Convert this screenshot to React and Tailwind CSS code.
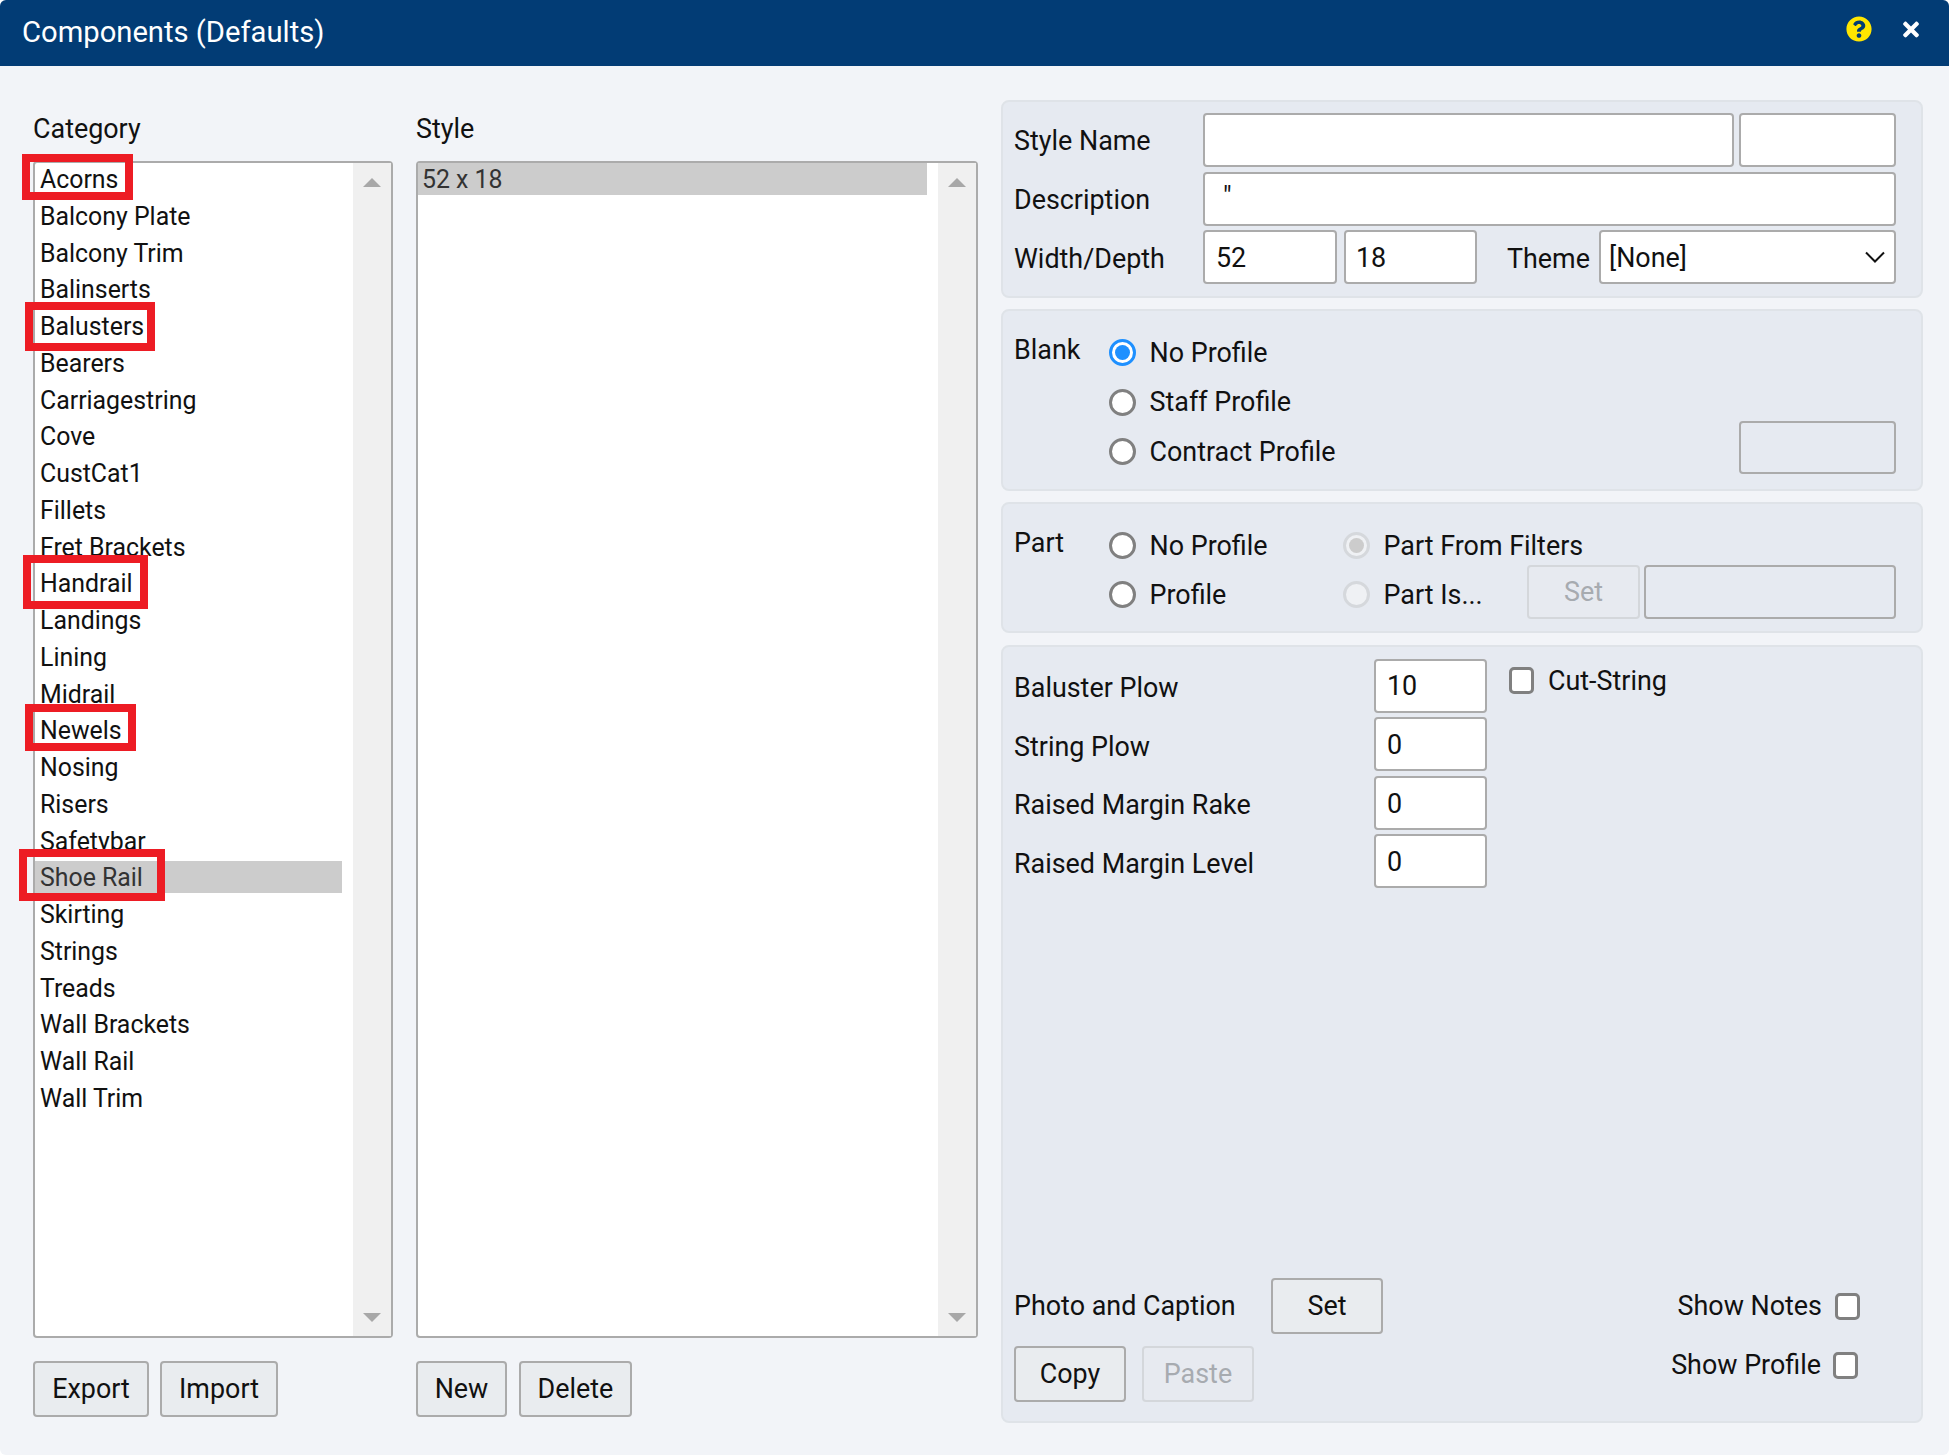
import React from 'react';
import { FaQuestionCircle, FaTimes } from 'react-icons/fa';

const CATEGORIES = [
  { name: 'Acorns', mark: 'left-[-13px] top-[-9px] w-[111px] h-[46px]' },
  { name: 'Balcony Plate' },
  { name: 'Balcony Trim' },
  { name: 'Balinserts' },
  { name: 'Balusters', mark: 'left-[-10px] top-[-8px] w-[130px] h-[49px]' },
  { name: 'Bearers' },
  { name: 'Carriagestring' },
  { name: 'Cove' },
  { name: 'CustCat1' },
  { name: 'Fillets' },
  { name: 'Fret Brackets' },
  { name: 'Handrail', mark: 'left-[-12px] top-[-12px] w-[125px] h-[54px]' },
  { name: 'Landings' },
  { name: 'Lining' },
  { name: 'Midrail' },
  { name: 'Newels', mark: 'left-[-10px] top-[-10px] w-[111px] h-[47px]' },
  { name: 'Nosing' },
  { name: 'Risers' },
  { name: 'Safetybar' },
  { name: 'Shoe Rail', selected: true, mark: 'left-[-16px] top-[-12px] w-[146px] h-[52px]' },
  { name: 'Skirting' },
  { name: 'Strings' },
  { name: 'Treads' },
  { name: 'Wall Brackets' },
  { name: 'Wall Rail' },
  { name: 'Wall Trim' },
];

const ListBox = ({ items, inset = 'pl-[5px]' }) => (
  <div className="flex h-[1177px] rounded-[4px] border-2 border-[#ababab] bg-white text-[24.86px]">
    <div className="min-w-0 flex-1 pr-[11px]">
      {items.map((item) => (
        <div
          key={item.name}
          className={`relative mb-[4.76px] h-[32px] leading-[33px] ${inset} ${item.selected ? 'bg-[#cccccc] text-[#333333]' : ''}`}
        >
          {item.name}
          {item.mark && <div className={`absolute z-10 border-[8px] border-[#ed1c24] ${item.mark}`} />}
        </div>
      ))}
    </div>
    <div className="flex w-[38px] flex-col items-center justify-between bg-[#f0f0f0] pt-[15px] pb-[14px]">
      <svg width="18" height="9" viewBox="0 0 18 9"><path d="M9 0 18 9H0Z" fill="#a8a8a8" /></svg>
      <svg width="18" height="9" viewBox="0 0 18 9"><path d="M0 0H18L9 9Z" fill="#a8a8a8" /></svg>
    </div>
  </div>
);

const Button = ({ children, width, disabled, className = '' }) => (
  <button
    className={`h-[56px] rounded-[4px] border-2 ${disabled ? 'border-[#d4d7db] bg-[#e7eaf0] text-[#a7abb0]' : 'border-[#ababab] bg-[#e9ecef] text-[#111111]'} ${width} ${className}`}
  >
    {children}
  </button>
);

const Field = ({ value = '', className = '' }) => (
  <input
    readOnly
    value={value}
    className={`h-[54px] rounded-[4px] border-2 border-[#ababab] bg-white pl-[10px] pt-[1px] text-[#111111] outline-none ${className}`}
  />
);

const Radio = ({ label, checked, disabled, className = '' }) => {
  let ring = 'border-[#808080] bg-white';
  if (checked) ring = 'border-[#1e90ff] bg-white';
  if (disabled) ring = 'border-[#d5d8dc] bg-[#eff1f4]';
  return (
    <div className={`flex h-[27px] items-center ${className}`}>
      <span className={`mr-[13.5px] flex h-[27px] w-[27px] shrink-0 items-center justify-center rounded-full border-[3px] ${ring}`}>
        {checked && <span className={`h-[15px] w-[15px] rounded-full ${disabled ? 'bg-[#cccccc]' : 'bg-[#1e90ff]'}`} />}
      </span>
      <span className="whitespace-nowrap pt-[1px]">{label}</span>
    </div>
  );
};

const Check = () => (
  <span className="h-[27px] w-[25px] shrink-0 rounded-[5px] border-[3px] border-[#808080] bg-white" />
);

const Panel = ({ children, className = '' }) => (
  <div className={`rounded-[8px] border-2 border-[#dfe3e8] bg-[#e6eaf1] pl-[11px] ${className}`}>{children}</div>
);

const PLOWS = [
  { label: 'Baluster Plow', value: '10', height: 'h-[53px]' },
  { label: 'String Plow', value: '0', height: 'h-[54px]' },
  { label: 'Raised Margin Rake', value: '0', height: 'h-[53px]' },
  { label: 'Raised Margin Level', value: '0', height: 'h-[53px]' },
];

export default function App() {
  return (
    <div className="h-[1455px] w-[1949px] overflow-hidden rounded-[6px] bg-[#f2f4f8] font-['Roboto',sans-serif] text-[26.9px] text-[#111111]">
      <header className="flex h-[66px] items-center justify-between bg-[#023c75] pl-[22px] pr-[30px] text-white">
        <h1 className="text-[29.2px] font-normal">Components (Defaults)</h1>
        <div className="mb-[8px] flex items-center gap-[31px]">
          <FaQuestionCircle className="h-[26px] w-[26px] text-[#ffe600]" />
          <FaTimes className="h-[23px] w-[16px]" />
        </div>
      </header>

      <main className="flex pl-[33px] pt-[34px]">
        <section className="w-[360px]">
          <div className="h-[61px] pt-[11px] leading-[36px]">Category</div>
          <ListBox items={CATEGORIES} />
          <div className="mt-[23px] flex gap-[11px]">
            <Button width="w-[116px]">Export</Button>
            <Button width="w-[118px]">Import</Button>
          </div>
        </section>

        <section className="ml-[23px] w-[562px]">
          <div className="h-[61px] pt-[11px] leading-[36px]">Style</div>
          <ListBox items={[{ name: '52 x 18', selected: true }]} inset="pl-[4px]" />
          <div className="mt-[23px] flex gap-[12px]">
            <Button width="w-[91px]">New</Button>
            <Button width="w-[113px]">Delete</Button>
          </div>
        </section>

        <section className="ml-[23px] flex w-[922px] flex-col gap-[11px]">
          <Panel className="h-[198px] pt-[11px]">
            <div className="flex h-[53px] items-center">
              <label className="w-[189px] pt-[4px]">Style Name</label>
              <Field className="w-[531px]" />
              <Field className="ml-[5px] w-[157px]" />
            </div>
            <div className="mt-[6px] flex h-[54px] items-center">
              <label className="w-[189px] pt-[3px]">Description</label>
              <Field value={'"'} className="w-[693px] !pl-[18px] pb-[5px]" />
            </div>
            <div className="mt-[4px] flex h-[54px] items-center">
              <label className="w-[189px] pt-[4px]">Width/Depth</label>
              <Field value="52" className="w-[134px] !pl-[11px]" />
              <Field value="18" className="ml-[7px] w-[133px]" />
              <label className="ml-[30px] w-[92px] pt-[4px]">Theme</label>
              <div className="flex h-[54px] w-[297px] items-center justify-between rounded-[4px] border-2 border-[#ababab] bg-white pl-[8px] pr-[9px]">
                <span className="pt-[3px]">[None]</span>
                <svg width="20" height="12" viewBox="0 0 20 12" fill="none" stroke="#111111" strokeWidth="2">
                  <path d="M1 1.5 10 10.5 19 1.5" />
                </svg>
              </div>
            </div>
          </Panel>

          <Panel className="flex h-[182px] pt-[23px]">
            <div className="w-[95px] leading-[33px]">Blank</div>
            <div className="flex flex-1 flex-col gap-[22.5px] pt-[5px]">
              <Radio label="No Profile" checked />
              <Radio label="Staff Profile" />
              <Radio label="Contract Profile" />
            </div>
            <div className="mb-[15px] mr-[25px] h-[53px] w-[157px] self-end rounded-[4px] border-2 border-[#ababab]" />
          </Panel>

          <Panel className="h-[131px] pt-[23px]">
            <div className="flex h-[38px]">
              <div className="w-[95px] leading-[33px]">Part</div>
              <Radio label="No Profile" className="mt-[5px] w-[234px]" />
              <Radio label="Part From Filters" checked disabled className="mt-[5px]" />
            </div>
            <div className="ml-[95px] flex h-[54px]">
              <Radio label="Profile" className="mt-[16px] w-[234px]" />
              <Radio label="Part Is..." disabled className="mt-[16px] w-[184px]" />
              <Button width="w-[113px]" disabled className="!h-[54px]">Set</Button>
              <div className="ml-[4px] h-[54px] w-[252px] rounded-[4px] border-2 border-[#ababab]" />
            </div>
          </Panel>

          <Panel className="mt-[1px] flex h-[778px] flex-col pb-[19px] pt-[12px]">
            <div className="flex flex-col gap-[5.3px]">
              {PLOWS.map((row, index) => (
                <div key={row.label} className={`flex items-center ${row.height}`}>
                  <label className="w-[360px] pt-[5px]">{row.label}</label>
                  <Field value={row.value} className={`w-[113px] !pl-[11px] ${row.height}`} />
                  {index === 0 && (
                    <div className="ml-[22px] mt-[8px] flex h-[27px] items-center gap-[14px] self-start">
                      <Check />
                      <span className="pt-[2px]">Cut-String</span>
                    </div>
                  )}
                </div>
              ))}
            </div>
            <div className="mt-auto flex items-center">
              <label className="w-[257px] pt-[1px]">Photo and Caption</label>
              <Button width="w-[112px]">Set</Button>
              <div className="ml-auto flex h-[27px] items-center gap-[13px] pr-[61px]">
                <span>Show Notes</span>
                <Check />
              </div>
            </div>
            <div className="mt-[12px] flex items-start">
              <Button width="w-[112px]">Copy</Button>
              <Button width="w-[112px]" disabled className="ml-[16px]">Paste</Button>
              <div className="ml-auto mt-[6px] flex h-[27px] items-center gap-[12px] pr-[63px]">
                <span>Show Profile</span>
                <Check />
              </div>
            </div>
          </Panel>
        </section>
      </main>
    </div>
  );
}
